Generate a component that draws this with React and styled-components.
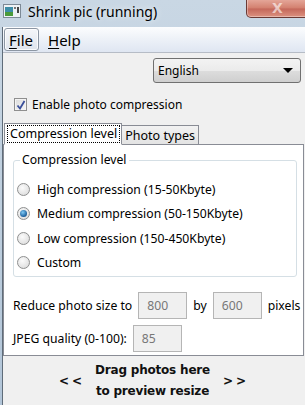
import React from 'react'
import styled, { createGlobalStyle } from 'styled-components'

const Global = createGlobalStyle`
  html, body { margin: 0; padding: 0; }
  body {
    width: 305px;
    height: 405px;
    overflow: hidden;
    font-family: "Noto Sans", "Open Sans", sans-serif;
    font-size: 12px;
    color: #000;
  }
`

const Window = styled.div`
  width: 305px;
  height: 405px;
  display: flex;
  flex-direction: column;
  background: linear-gradient(180deg, #c9d7e4 0%, #bccddd 60%, #b2c5d8 100%);
`

const TitleBar = styled.div`
  height: 27px;
  flex: none;
  display: flex;
  align-items: flex-start;
  position: relative;
`

const AppIcon = styled.svg`
  margin: 4px 0 0 3px;
  flex: none;
`

const Title = styled.div`
  margin: 2px 0 0 7px;
  font-family: "Noto Sans", sans-serif;
  font-size: 14px;
  color: #000;
  text-shadow: 0 0 6px rgba(255, 255, 255, 0.9);
`

const CloseBtn = styled.div`
  position: absolute;
  right: -4px;
  top: -1px;
  width: 61px;
  height: 18px;
  border: 1px solid #6b3a35;
  border-top: none;
  border-radius: 0 0 5px 5px;
  background: linear-gradient(180deg, #e6aa9d 0%, #d3806f 50%, #c4675a 55%, #dc9280 100%);
  box-shadow: inset 0 0 0 1px rgba(255, 255, 255, 0.35);
  display: flex;
  align-items: center;
  justify-content: center;
  color: rgba(255, 255, 255, 0.6);
  font-family: "DejaVu Sans", sans-serif;
  font-weight: bold;
  font-size: 14px;
`

const Client = styled.div`
  flex: 1;
  display: flex;
  flex-direction: column;
  margin-left: 2px;
  border-left: 1px solid #5f6c79;
  background: #f0f0f0;
`

const MenuBar = styled.div`
  height: 25px;
  flex: none;
  display: flex;
  align-items: center;
  gap: 4px;
  padding-left: 1px;
  background: linear-gradient(180deg, #fcfdfe 0%, #eef2f8 45%, #dfe6f2 100%);
  border-bottom: 1px solid #b6bcc6;
`

const MenuItem = styled.div`
  height: 21px;
  padding: 0 5px 0 4px;
  display: flex;
  align-items: center;
  font-size: 15px;
  border: 1px solid ${p => (p.$active ? '#8c96a3' : 'transparent')};
  border-radius: 3px;
  background: ${p => (p.$active ? 'linear-gradient(180deg, #f4f6f9, #dfe4ec)' : 'transparent')};
  box-shadow: ${p => (p.$active ? 'inset 0 0 0 1px rgba(255,255,255,0.8)' : 'none')};
  u { text-decoration: underline; text-underline-offset: 2px; }
`

const LangRow = styled.div`
  display: flex;
  padding: 5px 4px 0 150px;
`

const Select = styled.div`
  width: 143px;
  height: 23px;
  border: 1px solid #707070;
  border-radius: 3px;
  background: linear-gradient(180deg, #f3f3f3 0%, #ebebeb 50%, #dddddd 51%, #cfcfcf 100%);
  display: flex;
  align-items: center;
  justify-content: space-between;
  padding: 0 7px 0 4px;
  box-sizing: content-box;
`

const Arrow = styled.div`
  width: 0;
  height: 0;
  border-left: 5px solid transparent;
  border-right: 5px solid transparent;
  border-top: 5px solid #000;
`

const CheckRow = styled.label`
  display: flex;
  align-items: center;
  gap: 5px;
  padding: 13px 0 0 11px;
`

const CheckBox = styled.div`
  width: 11px;
  height: 11px;
  border: 1px solid #8f8f8f;
  background: linear-gradient(135deg, #dcdcdc, #f6f6f6);
  box-shadow: inset 0 0 0 1px #f4f4f4;
  display: flex;
  align-items: center;
  justify-content: center;
`

const Tabs = styled.div`
  display: flex;
  align-items: flex-end;
  margin-top: 10px;
  padding-left: 1px;
  position: relative;
  z-index: 1;
  height: 21px;
`

const Tab = styled.div`
  height: ${p => (p.$selected ? '22px' : '19px')};
  box-sizing: border-box;
  padding: ${p => (p.$selected ? '2px 2px 0 3px' : '0 3px')};
  display: flex;
  align-items: ${p => (p.$selected ? 'flex-start' : 'center')};
  border: 1px solid #898c95;
  border-bottom: ${p => (p.$selected ? '1px solid #fff' : 'none')};
  background: ${p => (p.$selected ? '#fff' : 'linear-gradient(180deg, #f2f2f2, #e3e3e3)')};
  margin-left: ${p => (p.$selected ? '0' : '-1px')};
  margin-bottom: ${p => (p.$selected ? '-1px' : '0')};
  font-size: 12.5px;
  span {
    outline: ${p => (p.$selected ? '1px dotted #000' : 'none')};
    outline-offset: 0;
    padding: 0 2px;
    line-height: 16px;
  }
`

const Panel = styled.div`
  margin: 0 1px 0 0;
  height: 212px;
  flex: none;
  box-sizing: border-box;
  background: #fff;
  border: 1px solid #898c95;
  padding: 8px 6px 0 9px;
  display: flex;
  flex-direction: column;
`

const Group = styled.fieldset`
  margin: 0;
  height: 124px;
  flex: none;
  box-sizing: border-box;
  border: 1px solid #d5dfe5;
  border-radius: 3px;
  padding: 13px 0 0 3px;
  display: flex;
  flex-direction: column;
  gap: 5.4px;
  legend {
    margin-left: 3px;
    padding: 0 2px;
    font-size: 12.2px;
    line-height: 14px;
  }
`

const RadioRow = styled.div`
  display: flex;
  align-items: center;
  gap: 7px;
  height: 19px;
  font-size: 12.2px;
  white-space: nowrap;
`

const Radio = styled.div`
  width: 11px;
  height: 11px;
  border-radius: 50%;
  border: 1px solid #8e8f8f;
  background: radial-gradient(circle at 40% 35%, #fbfbfb, #d7d7d7);
  display: flex;
  align-items: center;
  justify-content: center;
  &::after {
    content: '';
    display: ${p => (p.$checked ? 'block' : 'none')};
    width: 7px;
    height: 7px;
    border-radius: 50%;
    background: radial-gradient(circle at 40% 35%, #7fc9f5, #1a5e9c 70%, #113a6c);
  }
`

const FieldRow = styled.div`
  display: flex;
  align-items: center;
  font-size: 12.2px;
  white-space: nowrap;
  margin-top: ${p => p.$top}px;
`

const Input = styled.div`
  width: 49px;
  height: 27px;
  flex: none;
  border: 1px solid #b5b5b5;
  background: #f0f0f0;
  color: #777;
  display: flex;
  align-items: center;
  padding-left: 8px;
  box-sizing: border-box;
  margin: 0 6px;
`

const DropZone = styled.div`
  flex: 1;
  display: flex;
  align-items: center;
  justify-content: center;
  font-family: "DejaVu Sans", sans-serif;
  font-weight: bold;
  font-size: 12px;
  color: #111;
`

const DropText = styled.div`
  text-align: center;
  line-height: 21px;
  letter-spacing: -0.2px;
  margin: 0 13px 0 10px;
`

const Chevrons = styled.div`
  font-size: 12px;
  letter-spacing: 3px;
`

function App() {
  return (
    <>
      <Global />
      <Window>
        <TitleBar>
          <AppIcon width="18" height="14" viewBox="0 0 18 14">
            <rect x="0.5" y="0.5" width="17" height="13" fill="#eef2f5" stroke="#7d8a96" />
            <rect x="2" y="3" width="8" height="9" fill="#3d8ea8" />
            <rect x="2" y="8" width="8" height="4" fill="#4a9a3a" />
            <rect x="11" y="3" width="2" height="2" fill="#777" />
            <rect x="14" y="3" width="2" height="6" fill="#444" />
          </AppIcon>
          <Title>Shrink pic (running)</Title>
          <CloseBtn>X</CloseBtn>
        </TitleBar>
        <Client>
          <MenuBar>
            <MenuItem $active><u>F</u>ile</MenuItem>
            <MenuItem><u>H</u>elp</MenuItem>
          </MenuBar>
          <LangRow>
            <Select>
              <span>English</span>
              <Arrow />
            </Select>
          </LangRow>
          <CheckRow>
            <CheckBox>
              <svg width="10" height="10" viewBox="0 0 10 10">
                <path d="M1.5 5.5 L4 8.5 L8.5 1" fill="none" stroke="#3a4f9a" strokeWidth="1.8" />
              </svg>
            </CheckBox>
            <span>Enable photo compression</span>
          </CheckRow>
          <Tabs>
            <Tab $selected><span>Compression level</span></Tab>
            <Tab>Photo types</Tab>
          </Tabs>
          <Panel>
            <Group>
              <legend>Compression level</legend>
              <RadioRow><Radio />High compression (15-50Kbyte)</RadioRow>
              <RadioRow><Radio $checked />Medium compression (50-150Kbyte)</RadioRow>
              <RadioRow><Radio />Low compression (150-450Kbyte)</RadioRow>
              <RadioRow><Radio />Custom</RadioRow>
            </Group>
            <FieldRow $top={15}>
              Reduce photo size to
              <Input>800</Input>
              by
              <Input>600</Input>
              pixels
            </FieldRow>
            <FieldRow $top={6}>
              JPEG quality (0-100):
              <Input>85</Input>
            </FieldRow>
          </Panel>
          <DropZone>
            <Chevrons>&lt;&lt;</Chevrons>
            <DropText>Drag photos here<br />to preview resize</DropText>
            <Chevrons>&gt;&gt;</Chevrons>
          </DropZone>
        </Client>
      </Window>
    </>
  )
}

export default App
